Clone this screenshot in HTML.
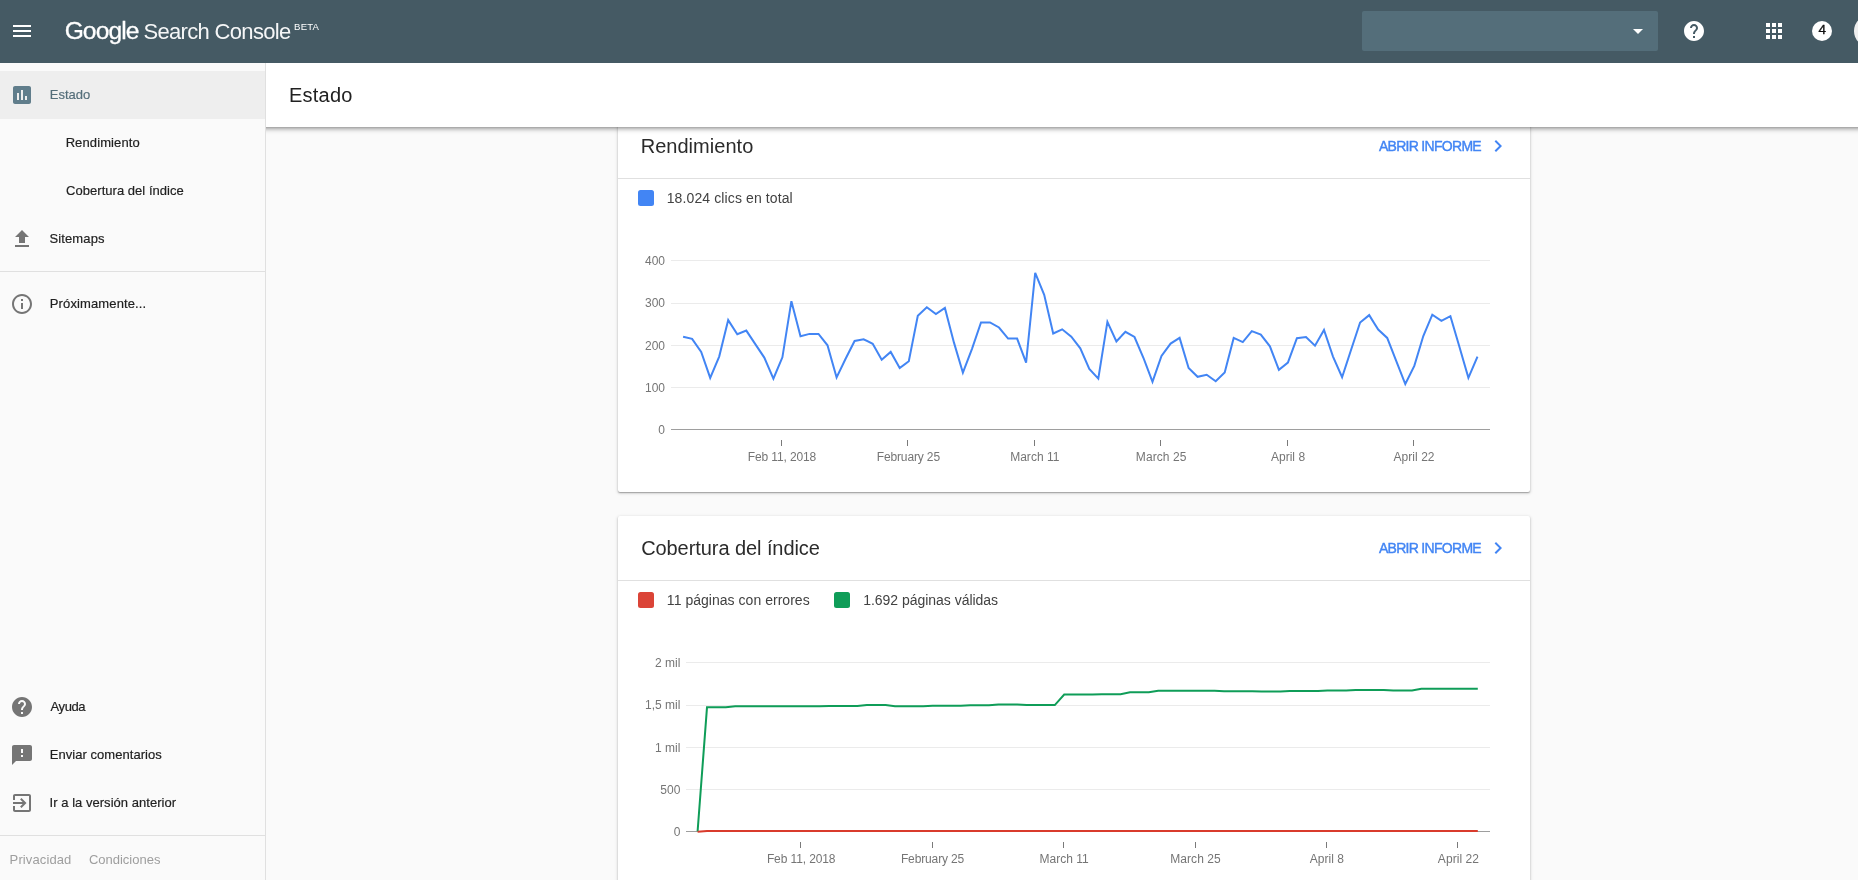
<!DOCTYPE html>
<html lang="es">
<head>
<meta charset="utf-8">
<title>Google Search Console</title>
<style>
html,body{margin:0;padding:0}
body{width:1858px;height:880px;overflow:hidden;position:relative;background:#fafafa;font-family:"Liberation Sans",sans-serif}
.t{position:absolute;white-space:nowrap;line-height:1;margin:0;padding:0;font-weight:normal;text-decoration:none}
.i{position:absolute;display:block;overflow:visible}
.b{position:absolute;box-sizing:border-box}
.titlebar{position:absolute;left:266px;top:63px;width:1592px;height:64px;background:#fff}
.tbshadow{position:absolute;left:266px;top:127px;width:1592px;height:8px;background:linear-gradient(to bottom,rgba(0,0,0,.36) 0px,rgba(0,0,0,.27) 1px,rgba(0,0,0,.19) 2px,rgba(0,0,0,.125) 3px,rgba(0,0,0,.075) 4px,rgba(0,0,0,.037) 5px,rgba(0,0,0,.017) 6px,rgba(0,0,0,0) 8px)}
.card{position:absolute;left:618px;width:912px;height:378px;background:#fff;border-radius:2px;box-shadow:0 1px 2px 0 rgba(0,0,0,.2),0 1px 3px 1px rgba(0,0,0,.1),0 1px 0 0 rgba(0,0,0,.13)}
.layer{position:absolute;left:0;top:0;width:0;height:0;will-change:transform}
</style>
</head>
<body>
<main class="layer" style="z-index:1">
<section class="layer">
<div class="card" style="top:114px"></div>
<div class="b" style="left:618px;top:178px;width:912px;height:1px;background:#e0e0e0"></div>
<h2 id="c1t" class="t" style="left:640.71px;top:136.07px;font-size:20px;font-weight:normal;color:#2b2b2b;letter-spacing:0.026px;">Rendimiento</h2>
<a id="c1a" class="t" style="left:1378.95px;top:139.05px;font-size:14px;font-weight:normal;color:#4285f4;letter-spacing:-0.708px;-webkit-text-stroke:0.4px #4285f4;">ABRIR INFORME</a>
<svg class="i" style="left:1485.5px;top:134px" width="24" height="24" viewBox="0 0 24 24"><path fill="#4285f4" d="M10 6L8.59 7.41 13.17 12l-4.58 4.59L10 18l6-6z"/></svg>
<div class="b" style="left:638px;top:190px;width:16px;height:16px;border-radius:2.5px;background:#4285f4"></div>
<span id="c1l" class="t" style="left:666.69px;top:191.25px;font-size:14px;font-weight:normal;color:#424242;letter-spacing:0.115px;">18.024 clics en total</span>
<svg class="i" style="left:618px;top:114px" width="912" height="378" viewBox="618 114 912 378" font-family="Liberation Sans, sans-serif" font-size="12" fill="#757575">
<rect x="671" y="260" width="819" height="1" fill="#ebebeb"/>
<rect x="671" y="303" width="819" height="1" fill="#ebebeb"/>
<rect x="671" y="345" width="819" height="1" fill="#ebebeb"/>
<rect x="671" y="387" width="819" height="1" fill="#ebebeb"/>
<rect x="671" y="429" width="819" height="1" fill="#9e9e9e"/>
<text x="665" y="265.00" text-anchor="end">400</text>
<text x="665" y="307.25" text-anchor="end">300</text>
<text x="665" y="349.50" text-anchor="end">200</text>
<text x="665" y="391.75" text-anchor="end">100</text>
<text x="665" y="434.00" text-anchor="end">0</text>
<rect x="781" y="440" width="1" height="6" fill="#7a7a7a"/>
<text x="782.0" y="461" text-anchor="middle" textLength="68.6" lengthAdjust="spacing">Feb 11, 2018</text>
<rect x="907" y="440" width="1" height="6" fill="#7a7a7a"/>
<text x="908.4" y="461" text-anchor="middle" textLength="63.4" lengthAdjust="spacing">February 25</text>
<rect x="1034" y="440" width="1" height="6" fill="#7a7a7a"/>
<text x="1034.8" y="461" text-anchor="middle" textLength="49.3" lengthAdjust="spacing">March 11</text>
<rect x="1160" y="440" width="1" height="6" fill="#7a7a7a"/>
<text x="1161.1" y="461" text-anchor="middle" textLength="50.5" lengthAdjust="spacing">March 25</text>
<rect x="1287" y="440" width="1" height="6" fill="#7a7a7a"/>
<text x="1288.0" y="461" text-anchor="middle" textLength="34.2" lengthAdjust="spacing">April 8</text>
<rect x="1413" y="440" width="1" height="6" fill="#7a7a7a"/>
<text x="1414.0" y="461" text-anchor="middle" textLength="41.1" lengthAdjust="spacing">April 22</text>
<polyline fill="none" stroke="#4285f4" stroke-width="2" stroke-linejoin="miter" points="683.1,336.7 692.1,338.9 701.2,351.9 710.2,377.9 719.2,356.6 728.2,320.1 737.3,334.2 746.3,330.6 755.3,344.1 764.3,357.6 773.4,378.6 782.4,357.3 791.4,301.2 800.5,336.3 809.5,333.9 818.5,333.9 827.5,345.3 836.6,377.5 845.6,358.8 854.6,341.0 863.6,339.3 872.7,343.8 881.7,359.7 890.7,351.9 899.7,368.0 908.8,361.3 917.8,315.7 926.8,307.2 935.9,314.0 944.9,307.9 953.9,342.4 962.9,372.7 972.0,348.8 981.0,322.5 990.0,322.5 999.0,327.5 1008.1,338.6 1017.1,338.6 1026.1,362.7 1035.2,272.8 1044.2,294.8 1053.2,333.5 1062.2,329.3 1071.3,336.7 1080.3,348.3 1089.3,368.9 1098.3,378.6 1107.4,321.8 1116.4,341.4 1125.4,331.8 1134.5,337.0 1143.5,358.0 1152.5,381.8 1161.5,355.9 1170.6,343.6 1179.6,337.9 1188.6,368.0 1197.6,376.8 1206.7,374.8 1215.7,381.2 1224.7,372.5 1233.7,337.9 1242.8,342.1 1251.8,331.1 1260.8,334.6 1269.9,346.3 1278.9,369.8 1287.9,362.6 1296.9,338.2 1306.0,337.0 1315.0,345.7 1324.0,329.9 1333.0,356.6 1342.1,377.2 1351.1,349.8 1360.1,322.5 1369.2,315.1 1378.2,329.6 1387.2,337.9 1396.2,360.9 1405.3,384.0 1414.3,365.9 1423.3,336.0 1432.3,314.7 1441.4,320.8 1450.4,316.1 1459.4,346.7 1468.4,377.9 1477.5,356.6"/>
</svg>
</section>
<section class="layer">
<div class="card" style="top:516px"></div>
<div class="b" style="left:618px;top:580px;width:912px;height:1px;background:#e0e0e0"></div>
<h2 id="c2t" class="t" style="left:641.13px;top:538.07px;font-size:20px;font-weight:normal;color:#2b2b2b;letter-spacing:-0.070px;">Cobertura del índice</h2>
<a id="c2a" class="t" style="left:1378.95px;top:541.05px;font-size:14px;font-weight:normal;color:#4285f4;letter-spacing:-0.708px;-webkit-text-stroke:0.4px #4285f4;">ABRIR INFORME</a>
<svg class="i" style="left:1485.5px;top:536px" width="24" height="24" viewBox="0 0 24 24"><path fill="#4285f4" d="M10 6L8.59 7.41 13.17 12l-4.58 4.59L10 18l6-6z"/></svg>
<div class="b" style="left:638px;top:592px;width:16px;height:16px;border-radius:2.5px;background:#db4437"></div>
<span id="c2l1" class="t" style="left:666.86px;top:593.25px;font-size:14px;font-weight:normal;color:#424242;letter-spacing:0.032px;">11 páginas con errores</span>
<div class="b" style="left:834px;top:592px;width:16px;height:16px;border-radius:2.5px;background:#0f9d58"></div>
<span id="c2l2" class="t" style="left:863.20px;top:593.25px;font-size:14px;font-weight:normal;color:#424242;letter-spacing:-0.026px;">1.692 páginas válidas</span>
<svg class="i" style="left:618px;top:516px" width="912" height="378" viewBox="618 516 912 378" font-family="Liberation Sans, sans-serif" font-size="12" fill="#757575">
<rect x="686" y="662" width="804" height="1" fill="#ebebeb"/>
<rect x="686" y="705" width="804" height="1" fill="#ebebeb"/>
<rect x="686" y="747" width="804" height="1" fill="#ebebeb"/>
<rect x="686" y="789" width="804" height="1" fill="#ebebeb"/>
<rect x="686" y="831" width="804" height="1" fill="#9e9e9e"/>
<text x="680.4" y="667.00" text-anchor="end">2 mil</text>
<text x="680.4" y="709.25" text-anchor="end">1,5 mil</text>
<text x="680.4" y="751.50" text-anchor="end">1 mil</text>
<text x="680.4" y="793.75" text-anchor="end">500</text>
<text x="680.4" y="836.00" text-anchor="end">0</text>
<rect x="800" y="842" width="1" height="6" fill="#7a7a7a"/>
<text x="801.2" y="863" text-anchor="middle" textLength="68.6" lengthAdjust="spacing">Feb 11, 2018</text>
<rect x="932" y="842" width="1" height="6" fill="#7a7a7a"/>
<text x="932.6" y="863" text-anchor="middle" textLength="63.4" lengthAdjust="spacing">February 25</text>
<rect x="1063" y="842" width="1" height="6" fill="#7a7a7a"/>
<text x="1064.1" y="863" text-anchor="middle" textLength="49.3" lengthAdjust="spacing">March 11</text>
<rect x="1195" y="842" width="1" height="6" fill="#7a7a7a"/>
<text x="1195.5" y="863" text-anchor="middle" textLength="50.5" lengthAdjust="spacing">March 25</text>
<rect x="1326" y="842" width="1" height="6" fill="#7a7a7a"/>
<text x="1326.9" y="863" text-anchor="middle" textLength="34.2" lengthAdjust="spacing">April 8</text>
<rect x="1457" y="842" width="1" height="6" fill="#7a7a7a"/>
<text x="1458.4" y="863" text-anchor="middle" textLength="41.1" lengthAdjust="spacing">April 22</text>
<polyline fill="none" stroke="#0f9d58" stroke-width="2" stroke-linejoin="miter" points="697.6,831.4 707.0,707.3 716.4,707.3 725.8,707.3 735.2,706.3 744.6,706.3 754.0,706.3 763.4,706.3 772.8,706.3 782.2,706.3 791.6,706.3 801.0,706.3 810.4,706.3 819.8,706.3 829.2,706.0 838.6,706.0 848.0,706.0 857.4,706.0 866.8,705.0 876.2,705.0 885.6,705.0 895.0,706.3 904.4,706.3 913.8,706.3 923.2,706.3 932.6,705.7 942.0,705.7 951.4,705.7 960.8,705.7 970.2,705.2 979.6,705.2 989.0,705.2 998.4,704.4 1007.8,704.4 1017.2,704.4 1026.6,705.1 1036.0,705.1 1045.4,705.1 1054.8,705.1 1064.2,694.6 1073.6,694.6 1083.0,694.6 1092.4,694.6 1101.8,694.2 1111.2,694.2 1120.6,694.2 1130.0,692.2 1139.4,692.2 1148.8,692.2 1158.2,690.8 1167.6,690.8 1177.0,690.8 1186.4,690.8 1195.8,690.8 1205.2,690.8 1214.6,690.8 1224.0,691.2 1233.4,691.2 1242.8,691.2 1252.2,691.2 1261.6,691.5 1271.0,691.5 1280.4,691.5 1289.8,690.9 1299.2,690.9 1308.6,690.9 1318.0,690.9 1327.4,690.6 1336.8,690.6 1346.2,690.6 1355.6,690.0 1365.0,690.0 1374.4,690.0 1383.8,690.0 1393.2,690.6 1402.6,690.6 1412.0,690.6 1421.4,688.8 1430.8,688.8 1440.2,688.8 1449.6,688.8 1459.0,688.8 1468.4,688.8 1477.8,688.8"/>
<polyline fill="none" stroke="#d93b2c" stroke-width="2" stroke-linejoin="miter" points="697.6,831.7 707.0,831.0 716.4,831.0 725.8,831.0 735.2,831.0 744.6,831.0 754.0,831.0 763.4,831.0 772.8,831.0 782.2,831.0 791.6,831.0 801.0,831.0 810.4,831.0 819.8,831.0 829.2,831.0 838.6,831.0 848.0,831.0 857.4,831.0 866.8,831.0 876.2,831.0 885.6,831.0 895.0,831.0 904.4,831.0 913.8,831.0 923.2,831.0 932.6,831.0 942.0,831.0 951.4,831.0 960.8,831.0 970.2,831.0 979.6,831.0 989.0,831.0 998.4,831.0 1007.8,831.0 1017.2,831.0 1026.6,831.0 1036.0,831.0 1045.4,831.0 1054.8,831.0 1064.2,831.0 1073.6,831.0 1083.0,831.0 1092.4,831.0 1101.8,831.0 1111.2,831.0 1120.6,831.0 1130.0,831.0 1139.4,831.0 1148.8,831.0 1158.2,831.0 1167.6,831.0 1177.0,831.0 1186.4,831.0 1195.8,831.0 1205.2,831.0 1214.6,831.0 1224.0,831.0 1233.4,831.0 1242.8,831.0 1252.2,831.0 1261.6,831.0 1271.0,831.0 1280.4,831.0 1289.8,831.0 1299.2,831.0 1308.6,831.0 1318.0,831.0 1327.4,831.0 1336.8,831.0 1346.2,831.0 1355.6,831.0 1365.0,831.0 1374.4,831.0 1383.8,831.0 1393.2,831.0 1402.6,831.0 1412.0,831.0 1421.4,831.0 1430.8,831.0 1440.2,831.0 1449.6,831.0 1459.0,831.0 1468.4,831.0 1477.8,831.0"/>
</svg>
</section>
<div class="layer">
<div class="titlebar"></div>
<div class="tbshadow"></div>
<h1 id="pt" class="t" style="left:288.93px;top:85.27px;font-size:20px;font-weight:normal;color:#212121;letter-spacing:0.247px;">Estado</h1>
</div>
</main>
<nav class="layer" style="z-index:5">
<div class="b" style="left:0;top:63px;width:266px;height:817px;background:#fafafa;border-right:1px solid #e0e0e0"></div>
<div class="b" style="left:0;top:71px;width:265px;height:48px;background:#eeeeee"></div>
<svg class="i" style="left:10px;top:83px" width="24" height="24" viewBox="0 0 24 24"><path fill="#607d8b" d="M19 3H5c-1.1 0-2 .9-2 2v14c0 1.1.9 2 2 2h14c1.1 0 2-.9 2-2V5c0-1.1-.9-2-2-2zM9 17H7v-7h2v7zm4 0h-2V7h2v10zm4 0h-2v-4h2v4z"/></svg>
<a id="n1" class="t" style="left:49.86px;top:87.80px;font-size:13px;font-weight:normal;color:#546e7a;letter-spacing:-0.030px;-webkit-text-stroke:0.18px #546e7a;">Estado</a>
<a id="n2" class="t" style="left:65.64px;top:136.00px;font-size:13px;font-weight:normal;color:#212121;letter-spacing:0.107px;-webkit-text-stroke:0.18px #212121;">Rendimiento</a>
<a id="n3" class="t" style="left:66.08px;top:183.90px;font-size:13px;font-weight:normal;color:#212121;letter-spacing:0.033px;-webkit-text-stroke:0.18px #212121;">Cobertura del índice</a>
<svg class="i" style="left:10px;top:227px" width="24" height="24" viewBox="0 0 24 24"><path fill="#757575" d="M9 16h6v-6h4l-7-7-7 7h4zm-4 2h14v2H5z"/></svg>
<a id="n4" class="t" style="left:49.47px;top:231.80px;font-size:13px;font-weight:normal;color:#212121;letter-spacing:0.126px;-webkit-text-stroke:0.18px #212121;">Sitemaps</a>
<div class="b" style="left:0;top:271px;width:265px;height:1px;background:#e0e0e0"></div>
<svg class="i" style="left:10px;top:292px" width="24" height="24" viewBox="0 0 24 24"><path fill="#757575" d="M11 17h2v-6h-2v6zm1-15C6.48 2 2 6.48 2 12s4.48 10 10 10 10-4.48 10-10S17.52 2 12 2zm0 18c-4.41 0-8-3.59-8-8s3.59-8 8-8 8 3.59 8 8-3.59 8-8 8zM11 9h2V7h-2v2z"/></svg>
<a id="n5" class="t" style="left:49.79px;top:296.90px;font-size:13px;font-weight:normal;color:#212121;letter-spacing:0.126px;-webkit-text-stroke:0.18px #212121;">Próximamente...</a>
<svg class="i" style="left:10px;top:695px" width="24" height="24" viewBox="0 0 24 24"><path fill="#757575" d="M12 2C6.48 2 2 6.48 2 12s4.48 10 10 10 10-4.48 10-10S17.52 2 12 2zm1 17h-2v-2h2v2zm2.07-7.75l-.9.92C13.45 12.9 13 13.5 13 15h-2v-.5c0-1.1.45-2.1 1.17-2.83l1.24-1.26c.37-.36.59-.86.59-1.41 0-1.1-.9-2-2-2s-2 .9-2 2H8c0-2.21 1.79-4 4-4s4 1.79 4 4c0 .88-.36 1.68-.93 2.25z"/></svg>
<a id="n6" class="t" style="left:50.59px;top:700.00px;font-size:13px;font-weight:normal;color:#212121;letter-spacing:-0.405px;-webkit-text-stroke:0.18px #212121;">Ayuda</a>
<svg class="i" style="left:10px;top:743px" width="24" height="24" viewBox="0 0 24 24"><path fill="#757575" d="M20 2H4c-1.1 0-1.99.9-1.99 2L2 22l4-4h14c1.1 0 2-.9 2-2V4c0-1.1-.9-2-2-2zm-7 12h-2v-2h2v2zm0-4h-2V6h2v4z"/></svg>
<a id="n7" class="t" style="left:49.67px;top:747.80px;font-size:13px;font-weight:normal;color:#212121;letter-spacing:0.050px;-webkit-text-stroke:0.18px #212121;">Enviar comentarios</a>
<svg class="i" style="left:10px;top:791px" width="24" height="24" viewBox="0 0 24 24"><path fill="#757575" d="M10.09 15.59L11.5 17l5-5-5-5-1.41 1.41L12.67 11H3v2h9.67l-2.58 2.59zM19 3H5c-1.11 0-2 .9-2 2v4h2V5h14v14H5v-4H3v4c0 1.1.89 2 2 2h14c1.1 0 2-.9 2-2V5c0-1.1-.9-2-2-2z"/></svg>
<a id="n8" class="t" style="left:49.57px;top:795.80px;font-size:13px;font-weight:normal;color:#212121;letter-spacing:0.034px;-webkit-text-stroke:0.18px #212121;">Ir a la versión anterior</a>
<div class="b" style="left:0;top:835px;width:265px;height:1px;background:#e0e0e0"></div>
<a id="f1" class="t" style="left:9.60px;top:852.80px;font-size:13px;font-weight:normal;color:#9e9e9e;letter-spacing:0.111px;">Privacidad</a>
<a id="f2" class="t" style="left:88.90px;top:852.80px;font-size:13px;font-weight:normal;color:#9e9e9e;letter-spacing:-0.002px;">Condiciones</a>
</nav>
<header class="layer" style="z-index:30">
<div class="b" style="left:0;top:0;width:1858px;height:63px;background:#455a64"></div>
<svg class="i" style="left:10px;top:19px" width="24" height="24" viewBox="0 0 24 24"><path fill="#fff" d="M3 18h18v-2H3v2zm0-5h18v-2H3v2zm0-7v2h18V6H3z"/></svg>
<span id="lg" class="t" style="left:64.64px;top:18.88px;font-size:24.6px;font-weight:normal;color:#fff;letter-spacing:-0.892px;-webkit-text-stroke:0.3px #fff;">Google</span>
<span id="sc" class="t" style="left:143.38px;top:21.08px;font-size:22px;font-weight:normal;color:rgba(255,255,255,.95);letter-spacing:-0.663px;">Search Console</span>
<span id="beta" class="t" style="left:294.11px;top:22.17px;font-size:9.6px;font-weight:normal;color:#fff;letter-spacing:0.122px;">BETA</span>
<div class="b" style="left:1362px;top:11px;width:296px;height:40px;border-radius:2px;background:#546e7a"></div>
<svg class="i" style="left:1626px;top:19px" width="24" height="24" viewBox="0 0 24 24"><path fill="#fff" d="M7 10l5 5 5-5z"/></svg>
<svg class="i" style="left:1682px;top:19px" width="24" height="24" viewBox="0 0 24 24"><path fill="#fff" d="M12 2C6.48 2 2 6.48 2 12s4.48 10 10 10 10-4.48 10-10S17.52 2 12 2zm1 17h-2v-2h2v2zm2.07-7.75l-.9.92C13.45 12.9 13 13.5 13 15h-2v-.5c0-1.1.45-2.1 1.17-2.83l1.24-1.26c.37-.36.59-.86.59-1.41 0-1.1-.9-2-2-2s-2 .9-2 2H8c0-2.21 1.79-4 4-4s4 1.79 4 4c0 .88-.36 1.68-.93 2.25z"/></svg>
<svg class="i" style="left:1762px;top:19px" width="24" height="24" viewBox="0 0 24 24"><path fill="#fff" d="M4 8h4V4H4v4zm6 12h4v-4h-4v4zm-6 0h4v-4H4v4zm0-6h4v-4H4v4zm6 0h4v-4h-4v4zm6-10v4h4V4h-4zm-6 4h4V4h-4v4zm6 6h4v-4h-4v4zm0 6h4v-4h-4v4z"/></svg>
<div class="b" style="left:1812px;top:21px;width:20px;height:20px;border-radius:50%;background:#fff"></div>
<span id="nb" class="t" style="left:1818.40px;top:23.07px;font-size:13.5px;font-weight:normal;color:#111;letter-spacing:0.000px;-webkit-text-stroke:0.35px #111;">4</span>
<div class="b" style="left:1854px;top:15px;width:32px;height:32px;border-radius:50%;background:#eeeeee"></div>
</header>
</body>
</html>
